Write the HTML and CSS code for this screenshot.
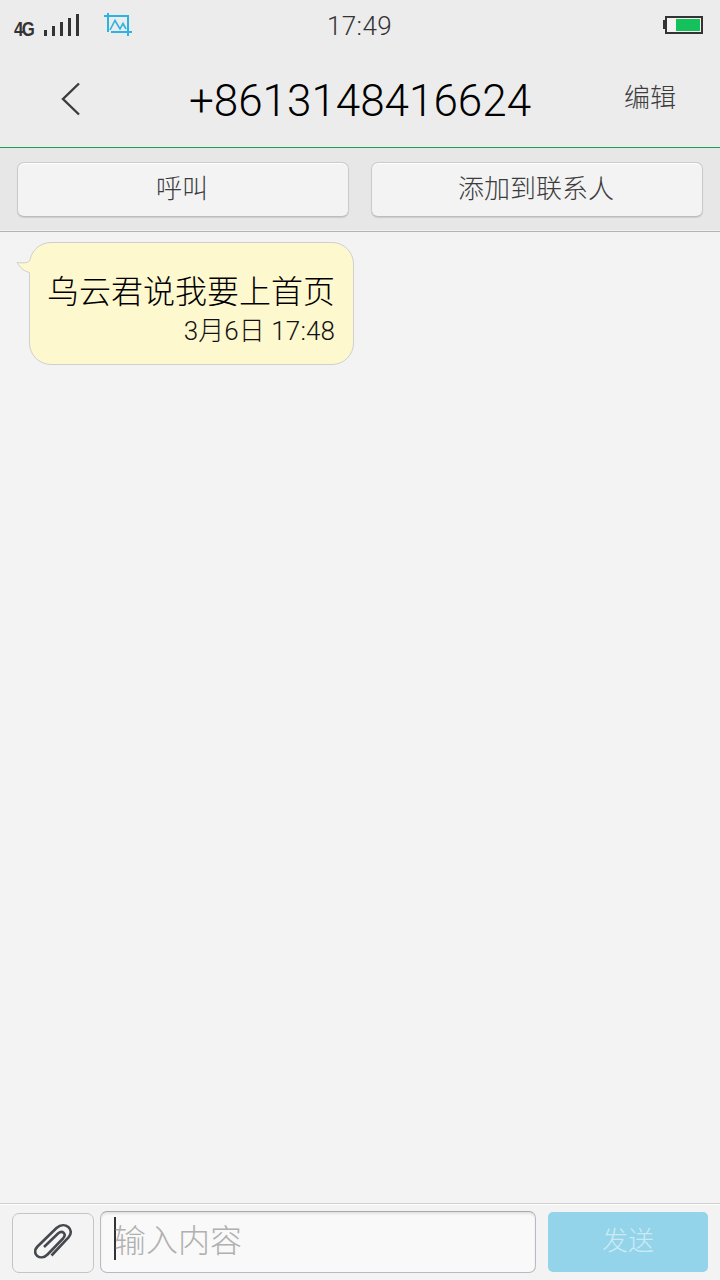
FILE: index.html
```
<!DOCTYPE html>
<html lang="zh-CN">
<head>
    <meta charset="UTF-8">
    <meta name="viewport" content="width=device-width, initial-scale=1.0">
    <title>+8613148416624</title>
    <link rel="stylesheet" href="styles.css">
</head>
<body>
    <div class="status-bar">
        <div class="status-left">
            <span class="network">4G</span>
            <svg class="signal" width="36" height="23" viewBox="0 0 36 23" fill="#333">
                <rect x="0" y="16" width="3" height="6"/>
                <rect x="8" y="12" width="3" height="10"/>
                <rect x="16" y="8" width="3" height="14"/>
                <rect x="24" y="4" width="3" height="18"/>
                <rect x="32" y="0" width="3" height="22"/>
            </svg>
            <svg class="capture" width="28" height="24" viewBox="0 0 28 24" fill="none" stroke="#2bb3e3" stroke-width="2">
                <path d="M0 4H24V24M4 1V20M7 20H28"/>
                <path d="M6 18L11 8.5L16 17L19 11.5L22 17" stroke-width="1.6"/>
            </svg>
        </div>
        <span class="clock">17:49</span>
        <div class="status-right">
            <svg width="40" height="18" viewBox="0 0 40 18">
                <rect x="0" y="4" width="3" height="9" fill="#333"/>
                <rect x="3" y="1" width="36" height="16" fill="#f3f3f3" stroke="#333" stroke-width="2"/>
                <rect x="13" y="3" width="24" height="12" fill="#13c25b"/>
            </svg>
        </div>
    </div>

    <div class="header">
        <div class="back">
            <svg width="20" height="34" viewBox="0 0 20 34" fill="none" stroke="#3c3c3c" stroke-width="2.4">
                <path d="M18 1.5L2 17L18 32.5"/>
            </svg>
        </div>
        <h1 class="title">+8613148416624</h1>
        <div class="edit">编辑</div>
    </div>

    <div class="actions">
        <button class="action-btn">呼叫</button>
        <button class="action-btn">添加到联系人</button>
    </div>

    <div class="messages">
        <div class="bubble">
            <svg class="tail" width="16" height="16" viewBox="0 0 16 16">
                <path d="M16 0H14C13 2.5 9 3.5 1 2.5C4 7 7 11 13.5 12.5H16Z" fill="#fef8cf"/>
                <path d="M14 0C13 2.5 9 3.5 1 2.5C4 7 7 11 13.5 12.5" fill="none" stroke="#cfcfcf"/>
            </svg>
            <div class="text">乌云君说我要上首页</div>
            <div class="time">3月6日 17:48</div>
        </div>
    </div>

    <div class="composer">
        <button class="attach">
            <svg width="40" height="38" viewBox="0 0 40 38" fill="none" stroke="#45484d" stroke-width="2.6">
                <path d="M10 24L24 10.5C28.5 6.5 33 11 29 15.5L13.5 31.5C6.5 38.5 -3.5 31 3.5 23.5L22.5 5C31 -2.5 41.5 6.5 34.5 14.5L17.5 32.5"/>
            </svg>
        </button>
        <div class="input-box">
            <span class="caret"></span>
            <span class="placeholder">输入内容</span>
        </div>
        <button class="send">发送</button>
    </div>
</body>
</html>
```

FILE: styles.css
```
* {
    box-sizing: border-box;
}
body {
    margin: 0;
    width: 720px;
    height: 1280px;
    display: flex;
    flex-direction: column;
    overflow: hidden;
    background-color: #f3f3f3;
    color: #000;
    font-family: Roboto, "Noto Sans CJK SC", sans-serif;
    font-weight: 300;
}
button {
    margin: 0;
    padding: 0;
    font-family: inherit;
    font-weight: inherit;
}
svg {
    display: block;
}

.status-bar {
    display: flex;
    height: 50px;
    background-color: #ececec;
}
.status-left {
    display: flex;
    align-items: flex-start;
    flex: 1;
    padding-left: 14px;
}
.network {
    width: 30px;
    padding-top: 19px;
    font-family: "Liberation Sans", sans-serif;
    font-size: 20px;
    font-weight: 700;
    line-height: 20px;
    letter-spacing: -2px;
    color: #333;
    transform: scaleX(0.84);
    transform-origin: left;
}
.signal {
    margin-top: 14px;
}
.capture {
    margin: 12px 0 0 24px;
}
.clock {
    margin-right: -2px;
    font-size: 26px;
    line-height: 53px;
    letter-spacing: 0.4px;
    color: #333;
}
.status-right {
    display: flex;
    justify-content: flex-end;
    flex: 1;
    padding: 16px 17px 0 0;
}

.header {
    display: flex;
    height: 98px;
    background-color: #ececec;
    border-bottom: 1px solid #1c9f50;
}
.back {
    width: 150px;
    padding: 32px 0 0 61px;
}
.title {
    flex: 1;
    margin: 0;
    text-align: center;
    font-size: 44px;
    font-weight: 300;
    line-height: 103px;
}
.edit {
    width: 150px;
    padding-left: 54px;
    font-size: 26px;
    line-height: 97px;
    color: #3c3c3c;
}

.actions {
    display: flex;
    gap: 22px;
    height: 84px;
    padding: 14px 17px;
    background-color: #e7e7e7;
    border-bottom: 1px solid #b4b4b4;
    box-shadow: inset 0 -1px 0 #f0f0f0;
}
.action-btn {
    flex: 1;
    height: 55px;
    padding: 0 2px 6px 0;
    background-color: #f3f3f3;
    border: 1px solid #cbcbcb;
    border-bottom-color: #bdbdbd;
    border-radius: 7px;
    box-shadow: inset 0 1px 0 #fff, 0 1px 1px #ccc;
    color: #3c3c3c;
    font-size: 26px;
}

.messages {
    flex: 1;
    padding: 10px 29px;
}
.bubble {
    position: relative;
    width: 325px;
    height: 123px;
    padding: 25px 18px 0 17px;
    background-color: #fef8cf;
    border: 1px solid #cfcfcf;
    border-radius: 22px;
}
.tail {
    position: absolute;
    left: -14px;
    top: 17px;
}
.text {
    font-size: 32px;
    line-height: 48px;
    white-space: nowrap;
}
.time {
    font-size: 26px;
    line-height: 31px;
    letter-spacing: 0.1px;
    text-align: right;
    color: #111;
}

.composer {
    display: flex;
    align-items: flex-start;
    height: 77px;
    padding: 7px 12px 0;
    border-top: 1px solid #d0d0d0;
    box-shadow: inset 0 1px 0 #fff;
}
.attach {
    width: 82px;
    height: 60px;
    margin: 2px 6px 0 0;
    padding: 0 0 3px 21px;
    background-color: #f4f4f4;
    border: 1px solid #c4c4c8;
    border-radius: 7px;
}
.input-box {
    display: flex;
    align-items: center;
    width: 436px;
    height: 62px;
    margin-right: 12px;
    padding: 0 0 7px 13px;
    background-color: #f9f9f9;
    border: 1px solid #b9b9c4;
    border-top-color: #a8a8ac;
    border-radius: 7px;
    box-shadow: inset 0 2px 2px #e4e4e4;
}
.caret {
    width: 2px;
    height: 43px;
    margin-right: -2px;
    background-color: #333;
}
.placeholder {
    padding-top: 4px;
    font-size: 32px;
    line-height: 48px;
    color: #b0b0b0;
}
.send {
    width: 160px;
    height: 60px;
    margin-top: 1px;
    padding-bottom: 7px;
    background-color: #93d4ea;
    border: none;
    border-radius: 5px;
    color: #cdeaf4;
    font-size: 26px;
}
```
